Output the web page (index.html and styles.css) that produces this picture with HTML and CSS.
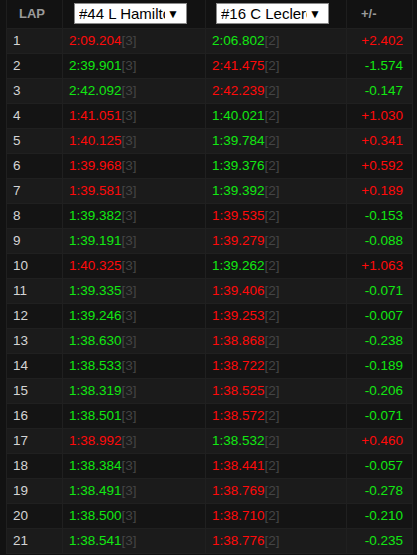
FILE: index.html
```html
<!DOCTYPE html>
<html>
<head>
<meta charset="utf-8">
<link rel="stylesheet" href="styles.css">
</head>
<body>
<table class="laps">
  <colgroup>
    <col class="c-lap"><col class="c-t1"><col class="c-t2"><col class="c-diff">
  </colgroup>
  <thead>
    <tr>
      <th class="h-lap">LAP</th>
      <th class="h-sel"><div class="sel"><span class="sel-text">#44 L Hamilton</span><span class="sel-arrow">▼</span></div></th>
      <th class="h-sel h-sel2"><div class="sel"><span class="sel-text">#16 C Leclerc</span><span class="sel-arrow">▼</span></div></th>
      <th class="h-diff">+/-</th>
    </tr>
  </thead>
  <tbody>
    <tr><td class="lap">1</td><td class="t r">2:09.204<span class="pos">[3]</span></td><td class="t g">2:06.802<span class="pos">[2]</span></td><td class="d r">+2.402</td></tr>
    <tr><td class="lap">2</td><td class="t g">2:39.901<span class="pos">[3]</span></td><td class="t r">2:41.475<span class="pos">[2]</span></td><td class="d g">-1.574</td></tr>
    <tr><td class="lap">3</td><td class="t g">2:42.092<span class="pos">[3]</span></td><td class="t r">2:42.239<span class="pos">[2]</span></td><td class="d g">-0.147</td></tr>
    <tr><td class="lap">4</td><td class="t r">1:41.051<span class="pos">[3]</span></td><td class="t g">1:40.021<span class="pos">[2]</span></td><td class="d r">+1.030</td></tr>
    <tr><td class="lap">5</td><td class="t r">1:40.125<span class="pos">[3]</span></td><td class="t g">1:39.784<span class="pos">[2]</span></td><td class="d r">+0.341</td></tr>
    <tr><td class="lap">6</td><td class="t r">1:39.968<span class="pos">[3]</span></td><td class="t g">1:39.376<span class="pos">[2]</span></td><td class="d r">+0.592</td></tr>
    <tr><td class="lap">7</td><td class="t r">1:39.581<span class="pos">[3]</span></td><td class="t g">1:39.392<span class="pos">[2]</span></td><td class="d r">+0.189</td></tr>
    <tr><td class="lap">8</td><td class="t g">1:39.382<span class="pos">[3]</span></td><td class="t r">1:39.535<span class="pos">[2]</span></td><td class="d g">-0.153</td></tr>
    <tr><td class="lap">9</td><td class="t g">1:39.191<span class="pos">[3]</span></td><td class="t r">1:39.279<span class="pos">[2]</span></td><td class="d g">-0.088</td></tr>
    <tr><td class="lap">10</td><td class="t r">1:40.325<span class="pos">[3]</span></td><td class="t g">1:39.262<span class="pos">[2]</span></td><td class="d r">+1.063</td></tr>
    <tr><td class="lap">11</td><td class="t g">1:39.335<span class="pos">[3]</span></td><td class="t r">1:39.406<span class="pos">[2]</span></td><td class="d g">-0.071</td></tr>
    <tr><td class="lap">12</td><td class="t g">1:39.246<span class="pos">[3]</span></td><td class="t r">1:39.253<span class="pos">[2]</span></td><td class="d g">-0.007</td></tr>
    <tr><td class="lap">13</td><td class="t g">1:38.630<span class="pos">[3]</span></td><td class="t r">1:38.868<span class="pos">[2]</span></td><td class="d g">-0.238</td></tr>
    <tr><td class="lap">14</td><td class="t g">1:38.533<span class="pos">[3]</span></td><td class="t r">1:38.722<span class="pos">[2]</span></td><td class="d g">-0.189</td></tr>
    <tr><td class="lap">15</td><td class="t g">1:38.319<span class="pos">[3]</span></td><td class="t r">1:38.525<span class="pos">[2]</span></td><td class="d g">-0.206</td></tr>
    <tr><td class="lap">16</td><td class="t g">1:38.501<span class="pos">[3]</span></td><td class="t r">1:38.572<span class="pos">[2]</span></td><td class="d g">-0.071</td></tr>
    <tr><td class="lap">17</td><td class="t r">1:38.992<span class="pos">[3]</span></td><td class="t g">1:38.532<span class="pos">[2]</span></td><td class="d r">+0.460</td></tr>
    <tr><td class="lap">18</td><td class="t g">1:38.384<span class="pos">[3]</span></td><td class="t r">1:38.441<span class="pos">[2]</span></td><td class="d g">-0.057</td></tr>
    <tr><td class="lap">19</td><td class="t g">1:38.491<span class="pos">[3]</span></td><td class="t r">1:38.769<span class="pos">[2]</span></td><td class="d g">-0.278</td></tr>
    <tr><td class="lap">20</td><td class="t g">1:38.500<span class="pos">[3]</span></td><td class="t r">1:38.710<span class="pos">[2]</span></td><td class="d g">-0.210</td></tr>
    <tr><td class="lap">21</td><td class="t g">1:38.541<span class="pos">[3]</span></td><td class="t r">1:38.776<span class="pos">[2]</span></td><td class="d g">-0.235</td></tr>
  </tbody>
</table>
</body>
</html>
```

FILE: styles.css
```css
html, body {
  margin: 0;
  padding: 0;
  background: #121212;
}
body {
  padding-left: 6px;
  font-family: "Liberation Sans", Arial, sans-serif;
}
.laps {
  width: 406px;
  border-collapse: collapse;
  table-layout: fixed;
  font-size: 13.5px;
}
.c-lap { width: 56px; }
.c-t1 { width: 143px; }
.c-t2 { width: 141px; }
.c-diff { width: 66px; }

thead tr {
  height: 28px;
  background: #121212;
}
th {
  padding: 0;
  text-align: left;
  font-weight: bold;
  color: #9a9a9a;
  font-size: 13px;
  border-left: 1px solid #1e1e1e;
  border-right: 1px solid #1e1e1e;
}
.h-lap { padding-left: 12px; }
.h-diff { padding-left: 14px; }
.h-sel { padding-left: 11px; }
.h-sel2 { padding-left: 10px; }
.sel {
  box-sizing: border-box;
  width: 113px;
  height: 21px;
  background: #fff;
  border: 1px solid #8a8a8a;
  display: flex;
  align-items: center;
  padding-left: 4px;
  padding-right: 7px;
  gap: 2px;
  font-weight: normal;
  font-size: 15px;
  color: #000;
}
.sel-text {
  flex: 1;
  min-width: 0;
  overflow: hidden;
  white-space: nowrap;
}
.sel-arrow {
  flex: none;
  font-size: 12px;
}

tbody tr { height: 25px; }
tbody tr:nth-child(odd) { background: #1b1b1b; }
tbody tr:nth-child(even) { background: #141414; }
td {
  padding: 0;
  border: 1px solid #202020;
  white-space: nowrap;
}
.lap {
  padding-left: 6px;
  color: #d4d4d4;
}
.t { padding-left: 6px; }
.d {
  text-align: right;
  padding-right: 9px;
}
.r { color: #ff0a0a; }
.g { color: #12e812; }
.pos { color: #454545; }
```
